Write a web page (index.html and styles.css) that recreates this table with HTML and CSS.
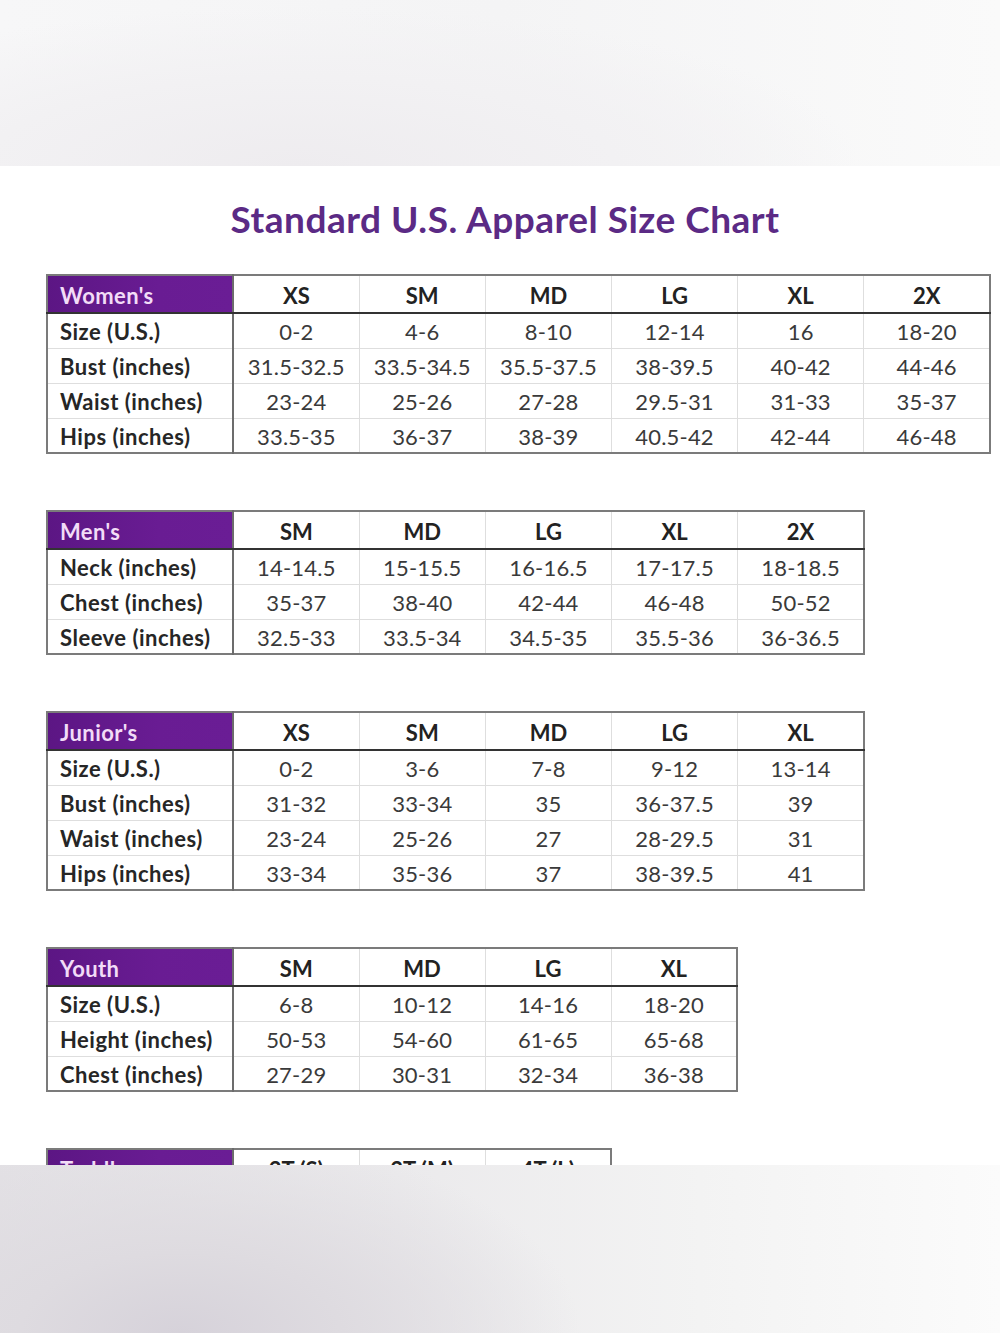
FILE: index.html
```html
<!DOCTYPE html>
<html lang="en">
<head>
<meta charset="utf-8">
<title>Standard U.S. Apparel Size Chart</title>
<link rel="stylesheet" href="styles.css">
</head>
<body>
<div class="top-band"></div>
<main class="sheet">
  <h1 class="title">Standard U.S. Apparel Size Chart</h1>

  <table class="chart w6">
    <colgroup><col class="c-label"><col><col><col><col><col><col></colgroup>
    <thead><tr><th class="cat">Women's</th><th>XS</th><th>SM</th><th>MD</th><th>LG</th><th>XL</th><th>2X</th></tr></thead>
    <tbody>
      <tr><th>Size (U.S.)</th><td>0-2</td><td>4-6</td><td>8-10</td><td>12-14</td><td>16</td><td>18-20</td></tr>
      <tr><th>Bust (inches)</th><td>31.5-32.5</td><td>33.5-34.5</td><td>35.5-37.5</td><td>38-39.5</td><td>40-42</td><td>44-46</td></tr>
      <tr><th>Waist (inches)</th><td>23-24</td><td>25-26</td><td>27-28</td><td>29.5-31</td><td>31-33</td><td>35-37</td></tr>
      <tr><th>Hips (inches)</th><td>33.5-35</td><td>36-37</td><td>38-39</td><td>40.5-42</td><td>42-44</td><td>46-48</td></tr>
    </tbody>
  </table>

  <table class="chart w5">
    <colgroup><col class="c-label"><col><col><col><col><col></colgroup>
    <thead><tr><th class="cat">Men's</th><th>SM</th><th>MD</th><th>LG</th><th>XL</th><th>2X</th></tr></thead>
    <tbody>
      <tr><th>Neck (inches)</th><td>14-14.5</td><td>15-15.5</td><td>16-16.5</td><td>17-17.5</td><td>18-18.5</td></tr>
      <tr><th>Chest (inches)</th><td>35-37</td><td>38-40</td><td>42-44</td><td>46-48</td><td>50-52</td></tr>
      <tr><th>Sleeve (inches)</th><td>32.5-33</td><td>33.5-34</td><td>34.5-35</td><td>35.5-36</td><td>36-36.5</td></tr>
    </tbody>
  </table>

  <table class="chart w5">
    <colgroup><col class="c-label"><col><col><col><col><col></colgroup>
    <thead><tr><th class="cat">Junior's</th><th>XS</th><th>SM</th><th>MD</th><th>LG</th><th>XL</th></tr></thead>
    <tbody>
      <tr><th>Size (U.S.)</th><td>0-2</td><td>3-6</td><td>7-8</td><td>9-12</td><td>13-14</td></tr>
      <tr><th>Bust (inches)</th><td>31-32</td><td>33-34</td><td>35</td><td>36-37.5</td><td>39</td></tr>
      <tr><th>Waist (inches)</th><td>23-24</td><td>25-26</td><td>27</td><td>28-29.5</td><td>31</td></tr>
      <tr><th>Hips (inches)</th><td>33-34</td><td>35-36</td><td>37</td><td>38-39.5</td><td>41</td></tr>
    </tbody>
  </table>

  <table class="chart w4">
    <colgroup><col class="c-label"><col><col><col><col></colgroup>
    <thead><tr><th class="cat">Youth</th><th>SM</th><th>MD</th><th>LG</th><th>XL</th></tr></thead>
    <tbody>
      <tr><th>Size (U.S.)</th><td>6-8</td><td>10-12</td><td>14-16</td><td>18-20</td></tr>
      <tr><th>Height (inches)</th><td>50-53</td><td>54-60</td><td>61-65</td><td>65-68</td></tr>
      <tr><th>Chest (inches)</th><td>27-29</td><td>30-31</td><td>32-34</td><td>36-38</td></tr>
    </tbody>
  </table>

  <table class="chart w3">
    <colgroup><col class="c-label"><col><col><col></colgroup>
    <thead><tr><th class="cat">Toddler</th><th>2T (S)</th><th>3T (M)</th><th>4T (L)</th></tr></thead>
    <tbody>
      <tr><th>Size (U.S.)</th><td>2T</td><td>3T</td><td>4T</td></tr>
    </tbody>
  </table>
</main>
<div class="bottom-band"></div>
</body>
</html>
```

FILE: styles.css
```css
html, body {
  margin: 0;
  padding: 0;
  background: #ffffff;
}

body {
  width: 1000px;
  font-family: Lato, "Open Sans", "Liberation Sans", sans-serif;
}

.top-band {
  height: 166px;
  background:
    radial-gradient(ellipse 70% 120% at 30% 100%, #eeecef 0%, #f2f1f3 45%, rgba(248,248,249,0) 80%),
    linear-gradient(90deg, #f7f7f8 0%, #f4f4f5 50%, #fafafa 100%);
}

.sheet {
  height: 999px;
  overflow: hidden;
  background: #ffffff;
  padding: 0 0 0 46px;
  box-sizing: border-box;
}

.title {
  margin: 0;
  padding: 32px 0 0 0;
  height: 76px;
  width: 918px;
  box-sizing: content-box;
  text-align: center;
  font-size: 37px;
  font-weight: 700;
  line-height: 42px;
  color: #5b2a85;
  letter-spacing: 0.5px;
}

.chart {
  border-collapse: collapse;
  table-layout: fixed;
  border: 2px solid #7b7b7b;
  margin-bottom: 56px;
  font-size: 22px;
}

.chart.w6 { width: 945px; }
.chart.w5 { width: 819px; }
.chart.w4 { width: 692px; }
.chart.w3 { width: 566px; }

.c-label { width: 186px; }

.chart th,
.chart td {
  padding: 3px 0 0 0;
  border: 1px solid #dedede;
  text-align: center;
  vertical-align: middle;
  white-space: nowrap;
  line-height: 24px;
}

.chart thead tr { height: 38px; }
.chart tbody tr { height: 35px; }

.chart thead th {
  font-weight: 700;
  color: #222222;
  border-bottom: 2px solid #333333;
  border-top: 2px solid #7b7b7b;
}

.chart thead th.cat {
  background: linear-gradient(90deg, #5c1684 0%, #691c93 60%, #6a1d95 100%);
  color: #f2dcf7;
  text-align: left;
  padding-left: 12px;
  font-weight: 700;
  letter-spacing: 0.4px;
}

.chart tbody th {
  text-align: left;
  padding-left: 12px;
  font-weight: 700;
  color: #262626;
  letter-spacing: 0.5px;
}

.chart th:first-child {
  border-right: 2px solid #6c6c6c;
}

.chart td {
  color: #3a3a3a;
  font-weight: 400;
  letter-spacing: 0.2px;
}

.bottom-band {
  height: 168px;
  background:
    radial-gradient(ellipse 40% 120% at 18% 100%, #d6d2da 0%, #dedbe0 40%, rgba(235,234,236,0) 100%),
    linear-gradient(90deg, #e3e1e5 0%, #ebeaec 40%, #f3f3f3 70%, #fbfbfb 100%);
}
```
